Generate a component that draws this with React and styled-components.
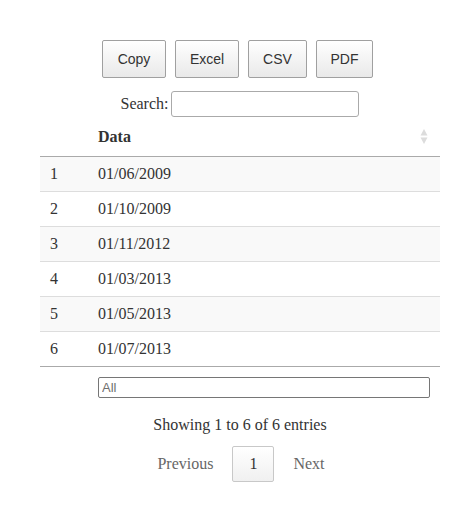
import React from "react";
import styled, { createGlobalStyle } from "styled-components";

const Global = createGlobalStyle`
  html, body { margin: 0; padding: 0; background: #fff; }
  body {
    font-family: "Liberation Serif", "Times New Roman", serif;
    font-size: 16px;
    color: #333;
  }
`;

const Wrapper = styled.div`
  width: 400px;
  margin-left: 40px;
  padding-top: 40px;
`;

const ButtonBar = styled.div`
  display: flex;
  justify-content: center;
  gap: 9px;
  padding-right: 5px;
`;

const ExportButton = styled.button`
  font-family: "Liberation Sans", Arial, sans-serif;
  font-size: 14px;
  line-height: 22px;
  color: #333;
  padding: 7px 14px;
  border: 1px solid #a0a0a0;
  border-radius: 2px;
  background: linear-gradient(to bottom, #fff 0%, #e9e9e9 100%);
  cursor: pointer;
  height: 38px;
  width: ${(p) => p.$w}px;
  display: flex;
  align-items: center;
  justify-content: center;
`;

const SearchRow = styled.label`
  display: flex;
  justify-content: center;
  align-items: center;
  margin-top: 13px;
  height: 26px;
  line-height: 18px;
`;

const SearchInput = styled.input`
  box-sizing: border-box;
  width: 188px;
  height: 26px;
  margin-left: 3px;
  border: 1px solid #aaa;
  border-radius: 3px;
  background: #fff;
  padding: 4px;
`;

const Table = styled.table`
  width: 400px;
  border-collapse: collapse;
  border-spacing: 0;
  margin-top: 1px;
`;

const HeadCell = styled.th`
  text-align: left;
  font-weight: bold;
  padding: 10px 10px;
  line-height: 18px;
  height: 18px;
  border-bottom: 1px solid #aaa;
  position: relative;
  width: ${(p) => (p.$narrow ? "28px" : "auto")};
`;

const SortIcon = styled.svg`
  position: absolute;
  right: 12px;
  top: 10px;
`;

const Row = styled.tr`
  background: ${(p) => (p.$odd ? "#f9f9f9" : "#fff")};
`;

const Cell = styled.td`
  padding: 8px 10px;
  line-height: 18px;
  height: 18px;
  border-top: ${(p) => (p.$divider ? "1px solid #ddd" : "none")};
`;

const FootCell = styled.td`
  border-top: 1px solid #aaa;
  padding: 10px 10px 10px 10px;
`;

const FilterInput = styled.input`
  box-sizing: border-box;
  display: block;
  width: 100%;
  height: 21px;
  border: 1px solid #767676;
  border-radius: 2px;
  padding: 1px 3px;
  font-family: "Liberation Sans", Arial, sans-serif;
  font-size: 13px;
  color: #333;
  &::placeholder {
    color: #6f6f6f;
  }
`;

const Info = styled.div`
  text-align: center;
  line-height: 18px;
  padding-top: 8px;
`;

const Pager = styled.div`
  display: flex;
  justify-content: center;
  align-items: center;
  gap: 2px;
  margin-top: 12px;
  padding-left: 2px;
`;

const PageLink = styled.span`
  box-sizing: border-box;
  padding: 8px 16px;
  line-height: 18px;
  height: 36px;
  color: ${(p) => (p.$current ? "#333" : "#666")};
  border: 1px solid ${(p) => (p.$current ? "#c8c8c8" : "transparent")};
  border-radius: 2px;
  background: ${(p) =>
    p.$current ? "linear-gradient(to bottom, #fff 0%, #f0f0f0 100%)" : "transparent"};
`;

const dates = [
  "01/06/2009",
  "01/10/2009",
  "01/11/2012",
  "01/03/2013",
  "01/05/2013",
  "01/07/2013",
];

export default function App() {
  return (
    <>
      <Global />
      <Wrapper>
        <ButtonBar>
          <ExportButton $w={64}>Copy</ExportButton>
          <ExportButton $w={64}>Excel</ExportButton>
          <ExportButton $w={59}>CSV</ExportButton>
          <ExportButton $w={57}>PDF</ExportButton>
        </ButtonBar>
        <SearchRow>
          Search:
          <SearchInput type="search" />
        </SearchRow>
        <Table>
          <thead>
            <tr>
              <HeadCell $narrow></HeadCell>
              <HeadCell>
                Data
                <SortIcon width="8" height="17" viewBox="0 0 8 17">
                  <path d="M4 1 L7.5 7.5 L0.5 7.5 Z" fill="#dcdcdc" />
                  <path d="M4 16 L7.5 9.5 L0.5 9.5 Z" fill="#dcdcdc" />
                </SortIcon>
              </HeadCell>
            </tr>
          </thead>
          <tbody>
            {dates.map((d, i) => (
              <Row key={d} $odd={i % 2 === 0}>
                <Cell $divider={i > 0}>{i + 1}</Cell>
                <Cell $divider={i > 0}>{d}</Cell>
              </Row>
            ))}
          </tbody>
          <tfoot>
            <tr>
              <FootCell></FootCell>
              <FootCell>
                <FilterInput type="text" placeholder="All" />
              </FootCell>
            </tr>
          </tfoot>
        </Table>
        <Info>Showing 1 to 6 of 6 entries</Info>
        <Pager>
          <PageLink>Previous</PageLink>
          <PageLink $current>1</PageLink>
          <PageLink>Next</PageLink>
        </Pager>
      </Wrapper>
    </>
  );
}
